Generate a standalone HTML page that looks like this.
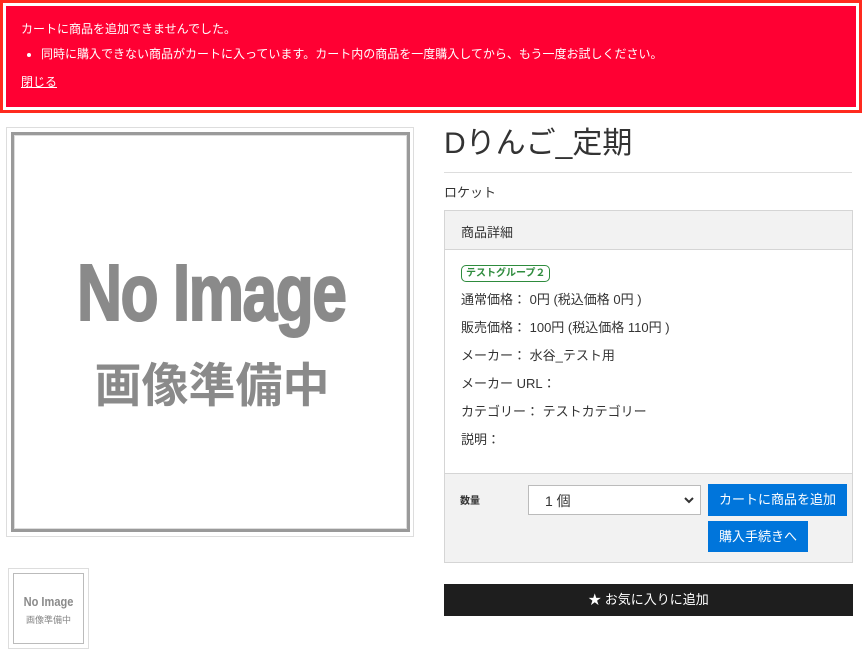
<!DOCTYPE html>
<html><head><meta charset="utf-8"><style>
*{box-sizing:border-box;margin:0;padding:0}
body{width:862px;height:659px;background:#fff;font-family:"Liberation Sans","Noto Sans CJK JP",sans-serif;color:#333;position:relative;overflow:hidden}
.a{position:absolute}
.alert{left:0;top:0;width:862px;height:113px;border:3px solid #ff2a1f;padding:3px;background:#fff}
.alert .in{width:100%;height:100%;background:#ff0033;color:#fff;font-size:12px;padding:15px 15px;line-height:16px}
.alert li{margin:9px 0 0 20px}
.alert u{display:inline-block;margin-top:12px}
.ni{font-weight:bold;color:#8a8a8a;white-space:nowrap}
.btn{background:#0075db;color:#fff;font-size:13px;text-align:center}
</style></head><body>
<div class="a alert"><div class="in">カートに商品を追加できませんでした。<ul><li>同時に購入できない商品がカートに入っています。カート内の商品を一度購入してから、もう一度お試しください。</li></ul><u>閉じる</u></div></div>

<div class="a" style="left:6px;top:127px;width:408px;height:410px;border:1px solid #ddd"></div>
<div class="a" style="left:11px;top:132px;width:399px;height:400px;border:3px solid #9a9a9a;box-shadow:inset 0 0 0 1px #ddd"></div>
<div class="a ni" style="left:44px;top:248px;width:300px;text-align:center;font-size:80px;line-height:90px;transform:scaleX(0.78);letter-spacing:-2px;-webkit-text-stroke:2px #8a8a8a">No Image</div>
<div class="a" style="left:62px;top:358px;width:300px;text-align:center;font-size:47px;line-height:56px;color:#8a8a8a;font-weight:bold">画像準備中</div>

<div class="a" style="left:8px;top:568px;width:81px;height:81px;border:1px solid #ddd"></div>
<div class="a" style="left:13px;top:573px;width:71px;height:71px;border:1px solid #bbb"></div>
<div class="a ni" style="left:13px;top:594px;width:71px;text-align:center;font-size:13px;line-height:16px;transform:scaleX(0.85)">No Image</div>
<div class="a" style="left:13px;top:613px;width:71px;text-align:center;font-size:9px;color:#888">画像準備中</div>

<div class="a" style="left:444px;top:124px;font-size:30px;line-height:40px;color:#333">Dりんご_定期</div>
<div class="a" style="left:444px;top:172px;width:408px;border-top:1px solid #ddd"></div>
<div class="a" style="left:444px;top:182px;font-size:13px">ロケット</div>

<div class="a" style="left:444px;top:210px;width:409px;height:353px;border:1px solid #d5d5d5">
<div style="height:39px;background:#f2f2f2;border-bottom:1px solid #d5d5d5;font-size:13px;padding:11px 16px">商品詳細</div>
<div style="padding:15px 16px 0;font-size:13px;line-height:28px">
<div style="line-height:14px;margin-bottom:4px"><span style="display:inline-block;border:1px solid #2e8b3d;color:#2e8b3d;border-radius:5px;font-size:10px;font-weight:bold;padding:1px 4px;line-height:13px">テストグループ２</span></div>
<div>通常価格： 0円 (税込価格 0円 )</div>
<div>販売価格： 100円 (税込価格 110円 )</div>
<div>メーカー： 水谷_テスト用</div>
<div>メーカー URL：</div>
<div>カテゴリー： テストカテゴリー</div>
<div>説明：</div>
</div>
</div>
<div class="a" style="left:444px;top:473px;width:409px;height:90px;background:#f2f2f2;border:1px solid #d5d5d5"></div>
<div class="a" style="left:460px;top:492px;font-size:10px;font-weight:bold">数量</div>
<div class="a" style="left:528px;top:485px;width:173px;height:30px;border:1px solid #bbb;background:#fff;font-size:14px;padding:5px 16px">1 個<svg style="position:absolute;right:6px;top:11px" width="10" height="7" viewBox="0 0 10 7"><path d="M1 1l4 4 4-4" stroke="#333" stroke-width="2" fill="none"/></svg></div>
<div class="a btn" style="left:708px;top:484px;width:139px;height:32px;line-height:32px">カートに商品を追加</div>
<div class="a btn" style="left:708px;top:521px;width:100px;height:31px;line-height:31px">購入手続きへ</div>
<div class="a" style="left:444px;top:584px;width:409px;height:32px;background:#1e1e1e;color:#fff;font-size:13px;text-align:center;line-height:32px">★ お気に入りに追加</div>
</body></html>
